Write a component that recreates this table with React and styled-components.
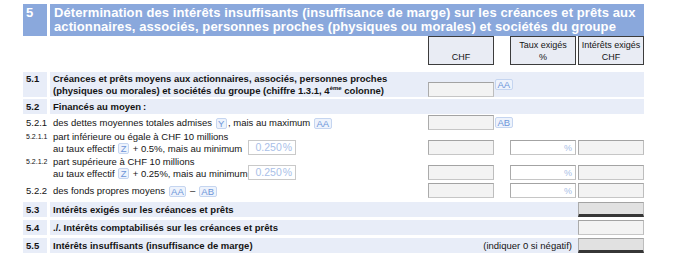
import React from 'react'
import styled, { createGlobalStyle } from 'styled-components';

const Global = createGlobalStyle`
body{
    margin:0;
    background:#fff;
    font-family:'Liberation Sans', Arial, sans-serif;
    color:#141414;
}
`;

const BLUE = '#8aa8dc';
const BAND = '#e8edf8';

const Page = styled.div`
width:621px;
padding:4px 0 0 23px;
`;

const Row = styled.div`
display:grid;
grid-template-columns:24px 594px;
column-gap:3px;
height:${p => p.$h}px;
margin-top:${p => p.$mt || 0}px;
`;

const Num = styled.div`
background:${p => p.$bg || 'transparent'};
color:${p => p.$light ? '#fff' : 'inherit'};
padding-left:3px;
padding-top:${p => p.$pt || 0}px;
font-size:${p => p.$size || 9.5}px;
font-weight:${p => p.$bold ? 700 : 400};
line-height:${p => p.$lh || 12}px;
display:flex;
align-items:${p => p.$align || 'center'};
white-space:nowrap;
`;

const Content = styled.div`
background:${p => p.$bg || 'transparent'};
display:grid;
grid-template-columns:378px 66px 16px 66px 68px;
align-items:${p => p.$align || 'center'};
`;

const Title = styled.div`
grid-column:1 / -1;
align-self:stretch;
color:#fff;
font-weight:700;
font-size:13px;
letter-spacing:0.1px;
line-height:14px;
padding:2px 0 0 4px;
white-space:nowrap;
`;

const Label = styled.div`
grid-column:${p => p.$span || '1'};
padding-left:3px;
font-size:9.5px;
font-weight:${p => p.$bold ? 700 : 400};
line-height:${p => p.$lh || 12}px;
white-space:nowrap;
display:flex;
align-items:flex-end;
justify-content:${p => p.$right ? 'flex-end' : 'flex-start'};
padding-right:${p => p.$right ? 4 : 0}px;
sup{
    font-size:6px;
    line-height:0;
}
`;

const Text = styled.div`
width:${p => p.$w ? p.$w + 'px' : 'auto'};
`;

const MinBox = styled.div`
width:48px;
height:15px;
box-sizing:border-box;
border:1px solid #c9c9c9;
background:#fff;
color:#a9c0e8;
font-size:10.5px;
line-height:13px;
text-align:right;
padding-right:3px;
`;

const ColHead = styled.div`
grid-column:${p => p.$col};
justify-self:end;
align-self:stretch;
width:66px;
box-sizing:border-box;
border:1px solid #3c3c3c;
background:#e9ecf4;
display:flex;
flex-direction:column;
justify-content:flex-end;
align-items:center;
font-size:9px;
line-height:12px;
padding-bottom:1px;
white-space:nowrap;
`;

const Field = styled.div`
grid-column:${p => p.$col};
justify-self:end;
width:66px;
height:15px;
box-sizing:border-box;
background:${p => p.$white ? '#fff' : p.$total ? '#e1e1e1' : '#f3f3f3'};
border:1px solid #bdbdbd;
border-top-color:#a3a3a3;
border-left-color:#ababab;
border-bottom:${p => p.$total ? '3px solid #363636' : '1px solid #c6c6c6'};
color:#a7bee6;
font-size:9px;
line-height:12px;
text-align:right;
padding:1px 3px 0 0;
`;

const Code = styled.span`
display:inline-block;
grid-column:${p => p.$col || 'auto'};
justify-self:start;
padding:0 1.5px;
margin:0 1px;
border:1px solid #c5d5f0;
background:#eef3fc;
color:#6d95d9;
border-radius:2px;
font-size:9.5px;
font-weight:400;
line-height:9px;
`;

function App() {
    return (
        <Page>
            <Global />
            {/**Section title */}
            <Row $h={32}>
                <Num $bg={BLUE} $light $bold $size={13} $lh={14} $pt={2} $align='flex-start'>5</Num>
                <Content $bg={BLUE}>
                    <Title>
                        Détermination des intérêts insuffisants (insuffisance de marge) sur les créances et prêts aux<br />
                        actionnaires, associés, personnes proches (physiques ou morales) et sociétés du groupe
                    </Title>
                </Content>
            </Row>

            {/**Column headings */}
            <Row $h={29}>
                <Num />
                <Content $align='stretch'>
                    <ColHead $col={2}><span>CHF</span></ColHead>
                    <ColHead $col={4}><span>Taux exigés</span><span>%</span></ColHead>
                    <ColHead $col={5}><span>Intérêts exigés</span><span>CHF</span></ColHead>
                </Content>
            </Row>

            <Row $h={25} $mt={7}>
                <Num $bg={BAND} $bold $lh={11.5} $pt={1} $align='flex-start'>5.1</Num>
                <Content $bg={BAND} $align='end'>
                    <Label $bold $lh={11.5} style={{ alignSelf: 'center' }}>
                        <Text>
                            Créances et prêts moyens aux actionnaires, associés, personnes proches<br />
                            (physiques ou morales) et sociétés du groupe (chiffre 1.3.1, 4<sup>ème</sup> colonne)
                        </Text>
                    </Label>
                    <Field $col={2} />
                    <Code $col={3} style={{ alignSelf: 'center' }}>AA</Code>
                </Content>
            </Row>

            <Row $h={15} $mt={2}>
                <Num $bg={BAND} $bold>5.2</Num>
                <Content $bg={BAND}>
                    <Label $bold>Financés au moyen&#8239;:</Label>
                </Content>
            </Row>

            <Row $h={15} $mt={1}>
                <Num>5.2.1</Num>
                <Content>
                    <Label>des dettes moyennes totales admises&nbsp;<Code>Y</Code>, mais au maximum&nbsp;<Code>AA</Code></Label>
                    <Field $col={2} />
                    <Code $col={3}>AB</Code>
                </Content>
            </Row>

            <Row $h={25}>
                <Num $size={7} $align='flex-start' $pt={1}>5.2.1.1</Num>
                <Content $align='end'>
                    <Label>
                        <Text $w={195}>
                            part inférieure ou égale à CHF 10 millions<br />
                            au taux effectif <Code>Z</Code> + 0.5%, mais au minimum
                        </Text>
                        <MinBox>0.250&#8202;%</MinBox>
                    </Label>
                    <Field $col={2} />
                    <Field $col={4} $white>%</Field>
                    <Field $col={5} />
                </Content>
            </Row>

            <Row $h={25}>
                <Num $size={7} $align='flex-start' $pt={1}>5.2.1.2</Num>
                <Content $align='end'>
                    <Label>
                        <Text $w={195}>
                            part supérieure à CHF 10 millions<br />
                            au taux effectif <Code>Z</Code> + 0.25%, mais au minimum
                        </Text>
                        <MinBox>0.250&#8202;%</MinBox>
                    </Label>
                    <Field $col={2} />
                    <Field $col={4} $white>%</Field>
                    <Field $col={5} />
                </Content>
            </Row>

            <Row $h={15} $mt={3}>
                <Num>5.2.2</Num>
                <Content>
                    <Label>des fonds propres moyens&nbsp;<Code>AA</Code>&nbsp;–&nbsp;<Code>AB</Code></Label>
                    <Field $col={2} />
                    <Field $col={4} $white>%</Field>
                    <Field $col={5} />
                </Content>
            </Row>

            <Row $h={15} $mt={4}>
                <Num $bg={BAND} $bold>5.3</Num>
                <Content $bg={BAND}>
                    <Label $bold>Intérêts exigés sur les créances et prêts</Label>
                    <Field $col={5} $total />
                </Content>
            </Row>

            <Row $h={15} $mt={3}>
                <Num $bg={BAND} $bold>5.4</Num>
                <Content $bg={BAND}>
                    <Label $bold>./. Intérêts comptabilisés sur les créances et prêts</Label>
                    <Field $col={5} />
                </Content>
            </Row>

            <Row $h={15} $mt={3}>
                <Num $bg={BAND} $bold>5.5</Num>
                <Content $bg={BAND}>
                    <Label $bold style={{ gridRow: 1 }}>Intérêts insuffisants (insuffisance de marge)</Label>
                    <Label $span='1 / 5' $right style={{ gridRow: 1 }}>(indiquer 0 si négatif)</Label>
                    <Field $col={5} $total style={{ gridRow: 1 }} />
                </Content>
            </Row>
        </Page>
    )
}

export default App
